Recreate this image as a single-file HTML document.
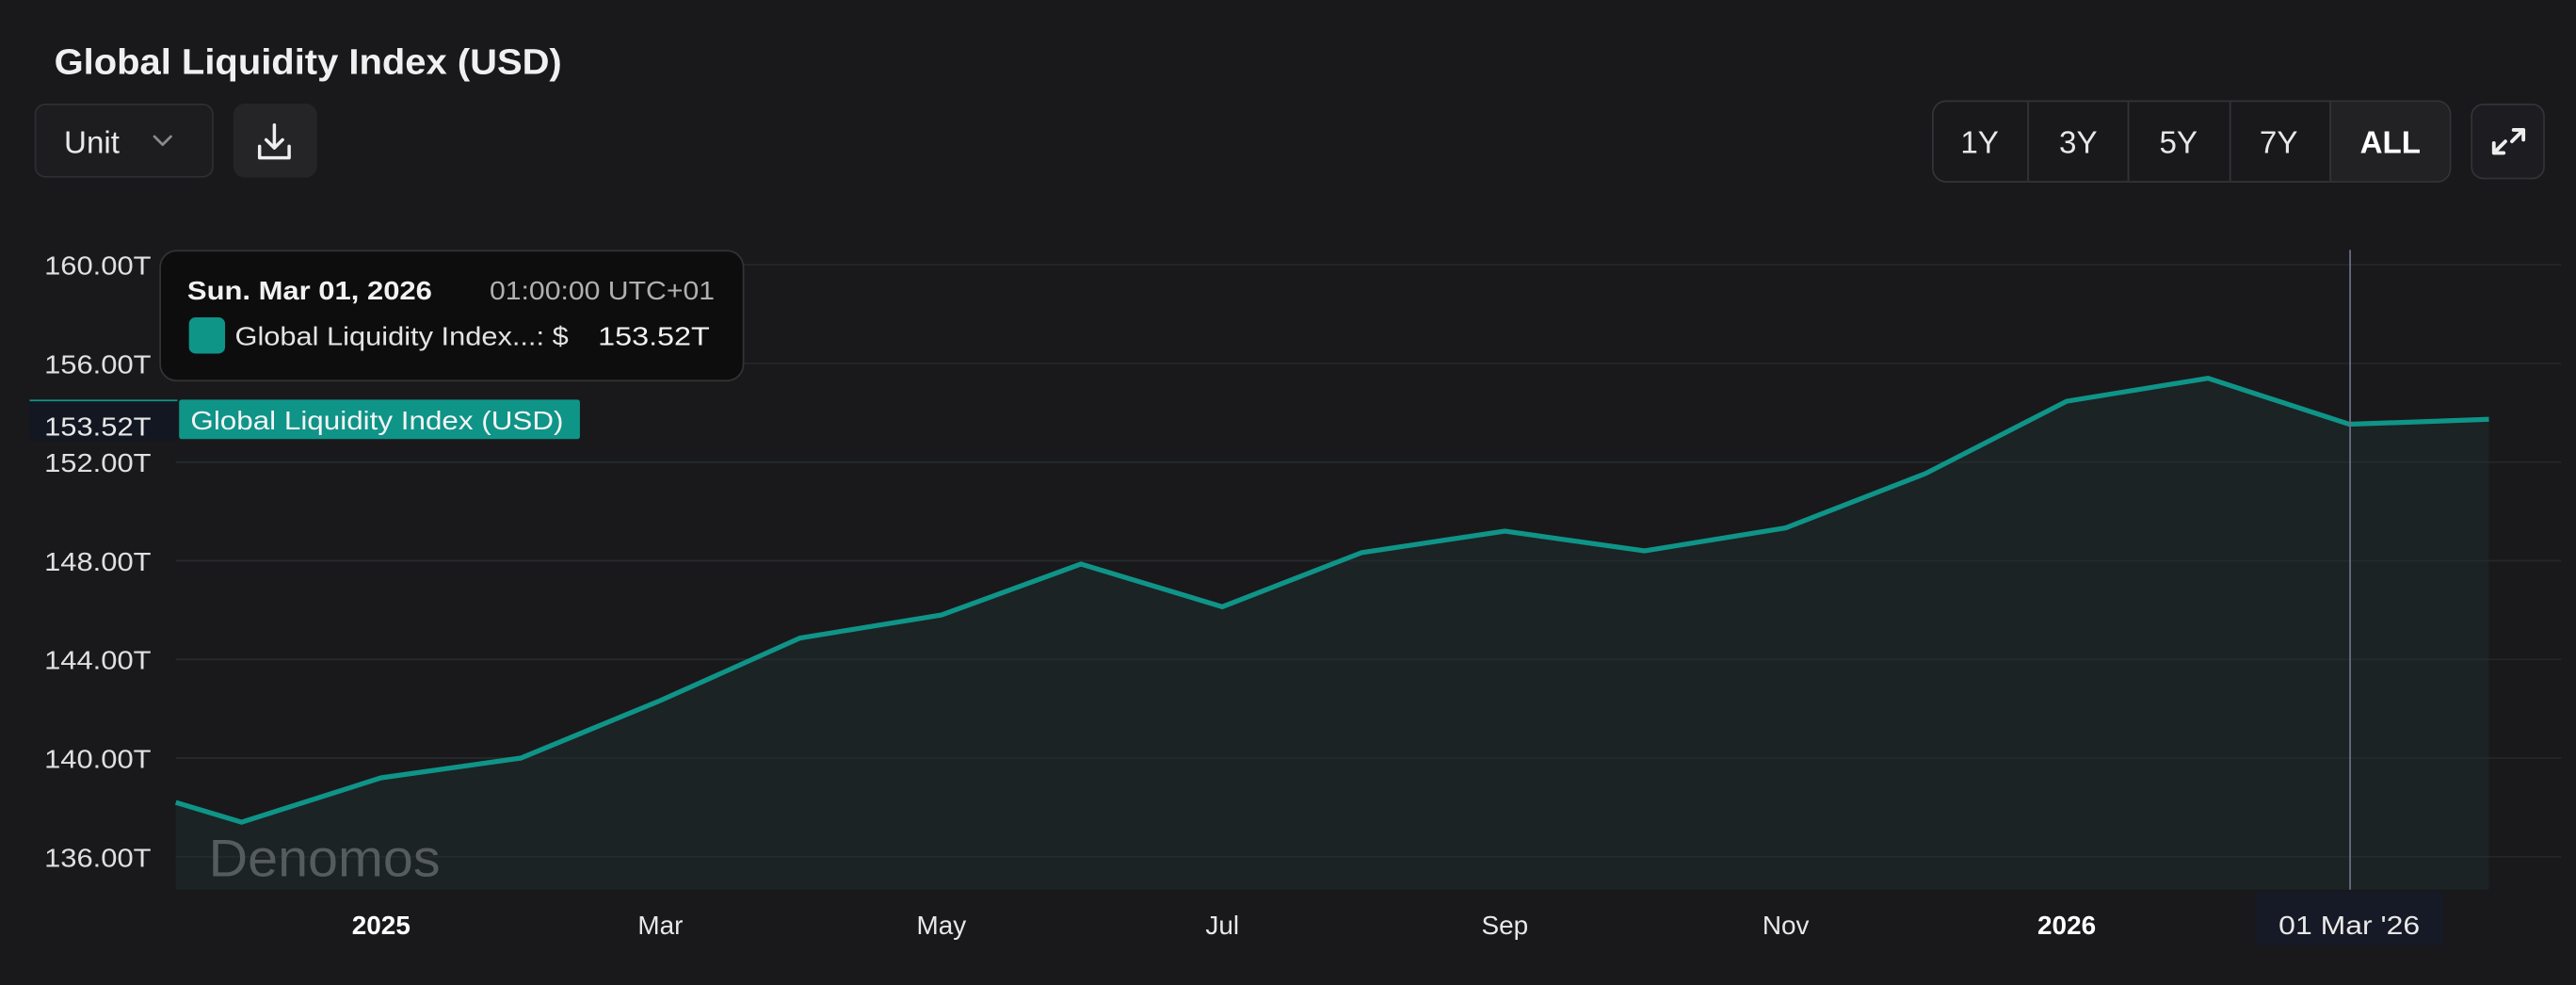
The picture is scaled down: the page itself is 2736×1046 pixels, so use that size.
<!DOCTYPE html>
<html><head><meta charset="utf-8"><style>
html,body{margin:0;padding:0;background:#19191b;width:2736px;height:1046px;overflow:hidden}
svg{display:block}
text{font-family:"Liberation Sans",Arial,sans-serif}
</style></head><body>
<svg width="2736" height="1046" viewBox="0 0 1568 599" preserveAspectRatio="none" xmlns="http://www.w3.org/2000/svg">
<rect width="1568" height="599" fill="#19191b"/>
<text x="33" y="45" font-size="22" font-weight="700" fill="#f0f0f0" textLength="309" lengthAdjust="spacingAndGlyphs">Global Liquidity Index (USD)</text>
<!-- Unit dropdown -->
<rect x="21.5" y="63.5" width="108" height="44" rx="6" fill="#1d1d20" stroke="#2e2e33"/>
<text x="39" y="93" font-size="19" fill="#e8e8e8">Unit</text>
<path d="M94 83 L99 88 L104 83" stroke="#8a8a8a" stroke-width="1.6" fill="none" stroke-linecap="round" stroke-linejoin="round"/>
<!-- download -->
<rect x="142" y="63" width="51" height="45" rx="7" fill="#252528"/>
<path d="M167 76 V90 M162 85 L167 90 L172 85 M158 89 V96 H176 V89" stroke="#eee" stroke-width="2" fill="none" stroke-linecap="round" stroke-linejoin="round"/>
<!-- segments -->
<rect x="1176.5" y="61.5" width="315" height="49" rx="8" fill="#19191b" stroke="#343438"/>
<path d="M1418 62 H1483 A8 8 0 0 1 1491 70 V102 A8 8 0 0 1 1483 110 H1418 Z" fill="#222224"/>
<g stroke="#343438"><line x1="1234.5" y1="62" x2="1234.5" y2="110"/><line x1="1295.5" y1="62" x2="1295.5" y2="110"/><line x1="1357.5" y1="62" x2="1357.5" y2="110"/><line x1="1418.5" y1="62" x2="1418.5" y2="110"/></g>
<g font-size="19" fill="#e8e8e8" text-anchor="middle">
<text x="1205" y="93">1Y</text><text x="1265" y="93">3Y</text><text x="1326" y="93">5Y</text><text x="1387" y="93">7Y</text>
<text x="1455" y="93" font-weight="700" fill="#fff">ALL</text></g>
<!-- expand -->
<rect x="1504.5" y="63.5" width="44" height="45" rx="7" fill="#1d1d21" stroke="#333337"/>
<path d="M1530 79 H1536 V85 M1536 79 L1529 86 M1518 87 V93 H1524 M1518 93 L1525 86" stroke="#eee" stroke-width="2.2" fill="none" stroke-linecap="round" stroke-linejoin="round"/>
<!-- grid -->
<g stroke="#262629" stroke-width="1">
<line x1="107" y1="161" x2="1559" y2="161"/><line x1="107" y1="221" x2="1559" y2="221"/><line x1="107" y1="281" x2="1559" y2="281"/><line x1="107" y1="341" x2="1559" y2="341"/><line x1="107" y1="401" x2="1559" y2="401"/><line x1="107" y1="461" x2="1559" y2="461"/><line x1="107" y1="521" x2="1559" y2="521"/></g>
<g font-size="16" fill="#e0e0e0" text-anchor="end">
<text x="92" y="167" textLength="65" lengthAdjust="spacingAndGlyphs">160.00T</text><text x="92" y="227" textLength="65" lengthAdjust="spacingAndGlyphs">156.00T</text><text x="92" y="287" textLength="65" lengthAdjust="spacingAndGlyphs">152.00T</text><text x="92" y="347" textLength="65" lengthAdjust="spacingAndGlyphs">148.00T</text><text x="92" y="407" textLength="65" lengthAdjust="spacingAndGlyphs">144.00T</text><text x="92" y="467" textLength="65" lengthAdjust="spacingAndGlyphs">140.00T</text><text x="92" y="527" textLength="65" lengthAdjust="spacingAndGlyphs">136.00T</text></g>
<!-- area -->
<path d="M107 488 L147 500 L232 473 L317 461 L402 426 L487 388 L573 374 L658 343 L744 369 L829 336 L916 323 L1001 335 L1087 321 L1172 288 L1258 244 L1344 230 L1430 258 L1515 255 L1515 541 L107 541 Z" fill="#1b2325"/>
<g stroke="#262a2c" stroke-width="1"><line x1="107" y1="461" x2="1515" y2="461"/><line x1="107" y1="521" x2="1515" y2="521"/><line x1="107" y1="401" x2="1515" y2="401"/><line x1="107" y1="341" x2="1515" y2="341"/><line x1="107" y1="281" x2="1515" y2="281"/></g>
<path d="M107 488 L147 500 L232 473 L317 461 L402 426 L487 388 L573 374 L658 343 L744 369 L829 336 L916 323 L1001 335 L1087 321 L1172 288 L1258 244 L1344 230 L1430 258 L1515 255" fill="none" stroke="#0f9488" stroke-width="3" stroke-linejoin="miter"/>
<text x="127" y="533" font-size="32" fill="#565b5c" textLength="141" lengthAdjust="spacingAndGlyphs">Denomos</text>
<line x1="1430.5" y1="152" x2="1430.5" y2="541" stroke="#6b6f86" stroke-width="1"/>
<!-- x axis -->
<g font-size="16" fill="#e8e8e8" text-anchor="middle">
<text x="232" y="568" font-weight="700" fill="#fff">2025</text><text x="402" y="568">Mar</text><text x="573" y="568">May</text><text x="744" y="568">Jul</text><text x="916" y="568">Sep</text><text x="1087" y="568">Nov</text><text x="1258" y="568" font-weight="700" fill="#fff">2026</text></g>
<rect x="1373" y="542" width="114" height="33" fill="#161a26"/>
<text x="1430" y="568" font-size="16" fill="#e8e8e8" text-anchor="middle" textLength="86" lengthAdjust="spacingAndGlyphs">01 Mar '26</text>
<!-- y highlight -->
<rect x="18" y="243" width="90" height="25" fill="#131722"/>
<line x1="18" y1="243.5" x2="108" y2="243.5" stroke="#0f9488"/>
<text x="92" y="265" font-size="16" fill="#e8e8e8" text-anchor="end" textLength="65" lengthAdjust="spacingAndGlyphs">153.52T</text>
<rect x="109" y="243" width="244" height="24" rx="1.5" fill="#0f9488"/>
<text x="116" y="261" font-size="16" fill="#f4f4f4" textLength="227" lengthAdjust="spacingAndGlyphs">Global Liquidity Index (USD)</text>
<!-- tooltip -->
<rect x="97.5" y="152.5" width="355" height="79" rx="10" fill="#0d0d0e" stroke="#333336"/>
<text x="114" y="182" font-size="16" font-weight="700" fill="#f2f2f2" textLength="149" lengthAdjust="spacingAndGlyphs">Sun. Mar 01, 2026</text>
<text x="298" y="182" font-size="16" fill="#b0b0b0" textLength="137" lengthAdjust="spacingAndGlyphs">01:00:00 UTC+01</text>
<rect x="115" y="193" width="22" height="22" rx="4" fill="#0f9488"/>
<text x="143" y="210" font-size="16" fill="#e4e4e4" textLength="203" lengthAdjust="spacingAndGlyphs">Global Liquidity Index...: $</text>
<text x="364" y="210" font-size="16" fill="#f2f2f2" font-family="Liberation Mono, monospace" textLength="68" lengthAdjust="spacingAndGlyphs">153.52T</text>
</svg>
</body></html>
